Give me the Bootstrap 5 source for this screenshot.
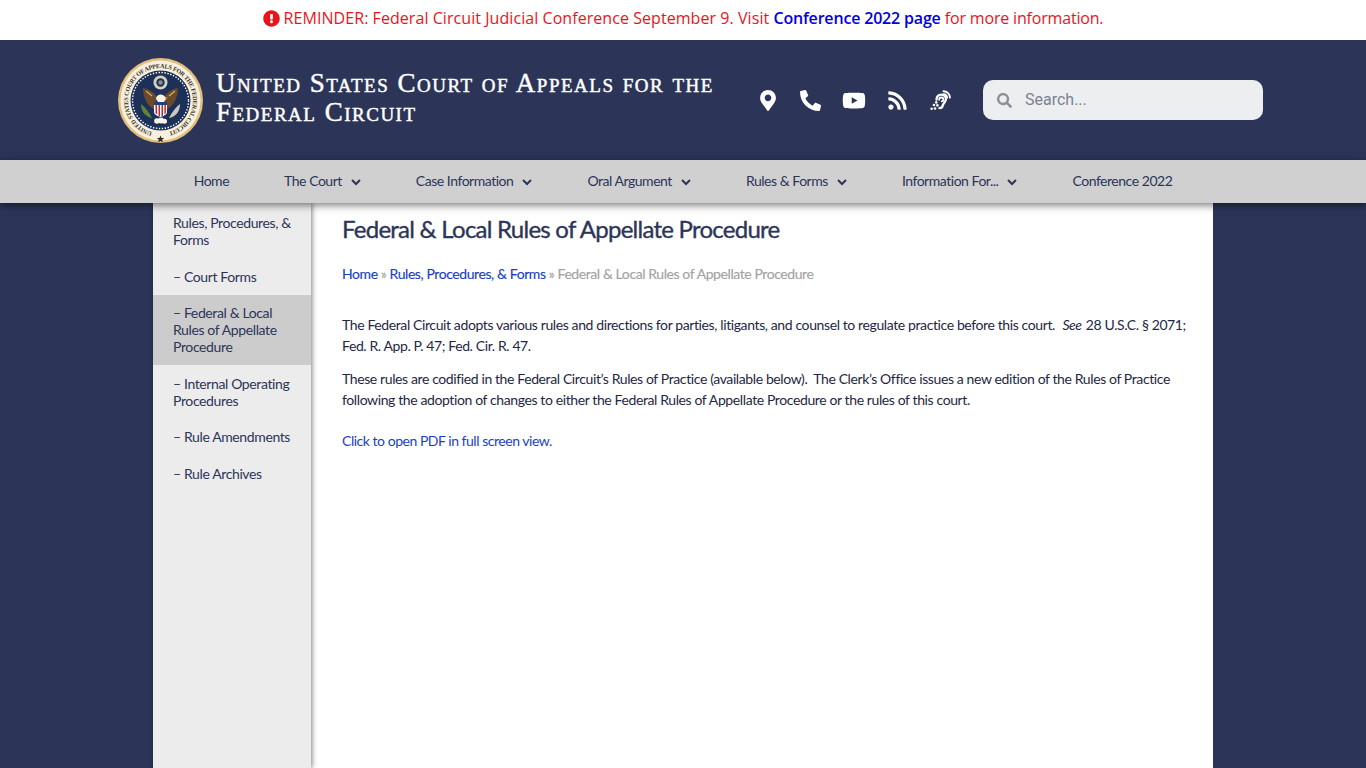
<!DOCTYPE html>
<html lang="en">
<head>
<meta charset="UTF-8">
<title>Federal &amp; Local Rules of Appellate Procedure</title>
<link href="https://cdn.jsdelivr.net/npm/bootstrap@5.3.0/dist/css/bootstrap.min.css" rel="stylesheet">
<style>
    body { background-color: #2c3558; font-family: "Lato", sans-serif; color: #2c3558; overflow: hidden; height: 768px; }
    .alert-strip { height: 40px; padding-bottom: 4px; background: #fff; color: #e8141c; font-family: "Open Sans", sans-serif; font-size: 16px; letter-spacing: .06px; }
    .alert-strip a { color: #0000e0; text-decoration: none; font-weight: 600; letter-spacing: -.18px; }
    .alert-strip .tail-text { letter-spacing: -.18px; }
    .alert-strip svg { width: 17px; height: 17px; fill: #e8141c; }
    .site-head { height: 120px; background: #2c3558; padding-left: 118px; }
    .site-title { width: 530px; margin-left: 13px; padding-bottom: 4px; color: #fff; font-family: "Liberation Serif", serif; font-variant: small-caps; font-weight: 400; -webkit-text-stroke: .45px #fff; font-size: 27px; line-height: 29px; letter-spacing: 1.5px; }
    .head-icons { width: 216px; display: grid; grid-template-columns: repeat(5, 1fr); justify-items: center; align-items: center; }
    .head-icons svg { fill: #fff; display: block; }
    .search-box { width: 280px; height: 40px; margin-left: 21px; background: #eceef0; border-radius: 10px; padding-left: 14px; color: #7b8290; font-family: Roboto, sans-serif; font-size: 16px; }
    .search-box svg { width: 15px; height: 15px; fill: #8a8f98; margin-right: 13px; }
    .main-menu { height: 43px; padding-bottom: 2px; background: #d0d0d0; position: relative; z-index: 2; box-shadow: 0 2px 8px rgba(0,0,0,.55); font-size: 14px; letter-spacing: -.47px; }
    .main-menu a { padding: 0 27.5px; color: #2c3558; text-decoration: none; }
    .main-menu svg { width: 10px; height: 7px; margin-left: 9px; fill: none; stroke: #2c3558; stroke-width: 2; }
    .page-sheet { width: 1060px; height: 565px; margin-left: 153px; background: #fff; }
    .side-col { width: 158px; padding-top: 1.5px; background: #ececec; box-shadow: 1px 0 5px rgba(0,0,0,.5); font-size: 14px; line-height: 17px; letter-spacing: -.38px; }
    .side-col a { display: block; padding: 9.75px 20px; color: #2c3558; text-decoration: none; }
    .side-col a.current { background: #ccc; }
    .body-col { padding: 0 25px 0 31px; font-size: 14px; line-height: 21px; letter-spacing: -.39px; color: #1f2744; }
    .body-col h1 { font-size: 24px; line-height: 30px; margin: 11px 0 0; font-weight: 400; letter-spacing: -.75px; -webkit-text-stroke: .35px #2c3558; color: #2c3558; }
    .body-col em { margin: 0 1px; }
    .crumbs { margin: 19px 0 30px; font-size: 14px; letter-spacing: -.42px; color: #a3a3a3; -webkit-text-stroke: .15px; }
    .body-col a { color: #1a3fc4; text-decoration: none; }
    .body-col p { margin-bottom: 12px; }
    .body-col p.pdf-line { margin-top: 20px; letter-spacing: -.47px; }
    .seal-wrap { width: 85px; height: 85px; flex: none; }
</style>
</head>
<body>
    <div class="alert-strip d-flex align-items-center justify-content-center gap-1">
        <svg viewBox="0 0 512 512"><path d="M504 256c0 136.997-111.043 248-248 248S8 392.997 8 256C8 119.083 119.043 8 256 8s248 111.083 248 248zm-248 50c-25.405 0-46 20.595-46 46s20.595 46 46 46 46-20.595 46-46-20.595-46-46-46zm-43.673-165.346l7.418 136c.347 6.364 5.609 11.346 11.982 11.346h48.546c6.373 0 11.635-4.982 11.982-11.346l7.418-136c.375-6.874-5.098-12.654-11.982-12.654h-63.383c-6.884 0-12.356 5.78-11.981 12.654z"/></svg>
        <span>REMINDER: Federal Circuit Judicial Conference September 9. Visit <a href="#">Conference 2022 page</a> <span class="tail-text">for more information.</span></span>
    </div>

    <header class="site-head d-flex align-items-center">
        <div class="seal-wrap">
            <svg viewBox="0 0 85 85" width="85" height="85">
                <defs><path id="sealRing" d="M34.09 73.9A32.5 32.5 0 1 1 50.91 73.9"/></defs>
                <circle cx="42.5" cy="42.5" r="42.5" fill="#e3bf7c"/>
                <circle cx="42.5" cy="42.5" r="40" fill="#f8f0dc"/>
                <circle cx="42.5" cy="42.5" r="30" fill="#1d3158"/>
                <circle cx="42.5" cy="42.5" r="28" fill="none" stroke="#fff" stroke-width="1.4" stroke-dasharray="1.4 1.55"/>
                <text font-size="6.2" font-family="Liberation Serif, serif" font-weight="700" fill="#33302a" textLength="187"><textPath href="#sealRing">UNITED STATES COURT OF APPEALS FOR THE FEDERAL CIRCUIT</textPath></text>
                <path d="M42.500 77.500l1.100 2.400 2.600.2-2 1.700.6 2.500-2.300-1.300-2.300 1.300.6-2.500-2-1.700 2.600-.2z" fill="#33302a"/>
                <circle cx="42.500" cy="24.500" r="7" fill="#d6d2c2"/>
                <circle cx="42.500" cy="24.500" r="4.200" fill="#1d3158"/>
                <circle cx="42.500" cy="24.500" r="2.200" fill="#8f8f88"/>
                <path d="M39 39C35 33 30 31 25 30c0 8 3 17 11 21zM46 39c4-6 9-8 14-9 0 8-3 17-11 21z" fill="#6b4a2c"/>
                <path d="M28 33l6 5M57 33l-6 5" stroke="#d8b25e" stroke-width="1.200"/>
                <path d="M38 41c0-6 9-6 10 0l-2 3h-6z" fill="#f5f3ea"/>
                <path d="M47 39l3 1-3 1z" fill="#e0b040"/>
                <path d="M36 44h13v10c0 2.500-3.500 4-6.500 5-3-1-6.500-2.500-6.500-5z" fill="#fff"/>
                <path d="M36 44h13v3H36z" fill="#23407a"/>
                <path d="M37.500 47h1.500v9.200l-1.500-1zM40.500 47h1.500v11.200l-1.500-.5zM43.500 47H45v10.700l-1.500.5zM46.400 47h1.500v8l-1.500 1.200z" fill="#b22a36"/>
                <path d="M23 46c4 3 8 8 11 14-6-1-11-6-11-14z" fill="#5f8437"/>
                <path d="M62 46c-4 3-8 8-11 14 6-1 11-6 11-14z" fill="#c9c9bd"/>
                <circle cx="39" cy="63" r="2.800" fill="#f5f3ea"/><circle cx="43" cy="62.500" r="3" fill="#f5f3ea"/><circle cx="46.500" cy="63.300" r="2.500" fill="#f5f3ea"/>
            </svg>
        </div>
        <div class="site-title">United States Court of Appeals for the Federal Circuit</div>
        <div class="head-icons">
            <svg viewBox="0 0 384 512" width="16" height="21"><path d="M172.268 501.67C26.97 291.031 0 262.556 0 192 0 85.961 85.961 0 192 0s192 85.961 192 192c0 70.556-26.97 99.031-172.268 309.67-9.535 13.774-29.93 13.773-39.464 0zM192 272c44.183 0 80-35.817 80-80s-35.817-80-80-80-80 35.817-80 80 35.817 80 80 80z"/></svg>
            <svg viewBox="0 0 512 512" width="21" height="21"><g transform="translate(512 0) scale(-1 1)"><path d="M493.4 24.6l-104-24c-11.3-2.6-22.9 3.3-27.5 13.9l-48 112c-4.2 9.8-1.4 21.3 6.9 28l60.6 49.6c-36 76.7-98.900 140.500-177.200 177.200l-49.600-60.600c-6.800-8.300-18.200-11.100-28-6.900l-112 48C3.900 366.500-2 378.100.6 389.400l24 104C27.100 504.200 36.700 512 48 512c256.100 0 464-207.500 464-464 0-11.200-7.700-20.900-18.600-23.400z"/></g></svg>
            <svg viewBox="0 0 576 512" width="24" height="21"><path d="M549.655 124.083c-6.281-23.65-24.787-42.276-48.284-48.597C458.781 64 288 64 288 64S117.22 64 74.629 75.486c-23.497 6.322-42.003 24.947-48.284 48.597-11.412 42.867-11.412 132.305-11.412 132.305s0 89.438 11.412 132.305c6.281 23.65 24.787 41.5 48.284 47.821C117.22 448 288 448 288 448s170.78 0 213.371-11.486c23.497-6.321 42.003-24.171 48.284-47.821 11.412-42.867 11.412-132.305 11.412-132.305s0-89.438-11.412-132.305zm-317.51 213.508V175.185l142.739 81.205-142.739 81.201z"/></svg>
            <svg viewBox="0 0 448 512" width="19" height="21"><path d="M128.081 415.959c0 35.369-28.672 64.041-64.041 64.041S0 451.328 0 415.959s28.672-64.041 64.041-64.041 64.04 28.673 64.04 64.041zm175.66 47.25c-8.354-154.6-132.185-278.587-286.95-286.95C7.656 175.765 0 183.105 0 192.253v48.069c0 8.415 6.49 15.472 14.887 16.018 111.832 7.284 201.473 96.702 208.772 208.772.547 8.397 7.604 14.887 16.018 14.887h48.069c9.149.001 16.489-7.655 15.995-16.79zm144.249.288C439.596 229.677 251.465 40.445 16.503 32.01 7.473 31.686 0 38.981 0 48.016v48.068c0 8.625 6.835 15.645 15.453 15.999 191.179 7.839 344.627 161.316 352.465 352.465.353 8.618 7.373 15.453 15.999 15.453h48.068c9.034-.001 16.329-7.474 16.005-16.504z"/></svg>
            <svg viewBox="0 0 21 21" width="21" height="21"><g fill="none" stroke="#fff" stroke-linecap="round"><path d="M13.500 1.200c3.600.1 6.300 2.800 6.400 6.400M13.500 4.200c2 .1 3.400 1.500 3.500 3.500" stroke-width="2"/><path d="M6.500 9.700c0-3.300 2.200-5.100 4.700-5.100 2.600 0 4.700 2 4.700 4.700 0 3-2.700 3.800-3.100 6-.3 1.800-1.500 2.900-3.300 2.900" stroke-width="2.300"/><path d="M9.200 9.800c0-1.400 .9-2.300 2.100-2.300s2.100 .9 2.100 2.100-1 1.700-1.700 1.700" stroke-width="1.800"/></g><circle cx="6.300" cy="12.400" r="1.300" fill="#fff"/><circle cx="4" cy="15" r="1.300" fill="#fff"/><circle cx="7.400" cy="15.400" r="1.300" fill="#fff"/><circle cx="1.600" cy="18.800" r="1.300" fill="#fff"/><circle cx="5" cy="18.500" r="1.300" fill="#fff"/></svg>
        </div>
        <div class="search-box d-flex align-items-center">
            <svg viewBox="0 0 512 512"><path d="M505 442.7L405.3 343c-4.5-4.5-10.6-7-17-7H372c27.6-35.3 44-79.7 44-128C416 93.1 322.9 0 208 0S0 93.1 0 208s93.1 208 208 208c48.3 0 92.7-16.4 128-44v16.3c0 6.4 2.5 12.5 7 17l99.7 99.7c9.4 9.4 24.6 9.4 33.9 0l28.3-28.3c9.4-9.4 9.4-24.6.1-34zM208 336c-70.7 0-128-57.2-128-128 0-70.7 57.2-128 128-128 70.7 0 128 57.2 128 128 0 70.7-57.2 128-128 128z"/></svg>
            <span>Search...</span>
        </div>
    </header>

    <nav class="main-menu d-flex align-items-center justify-content-center">
        <a href="#">Home</a>
        <a href="#">The Court<svg viewBox="0 0 10 7"><path d="M1 1l4 4 4-4"/></svg></a>
        <a href="#">Case Information<svg viewBox="0 0 10 7"><path d="M1 1l4 4 4-4"/></svg></a>
        <a href="#">Oral Argument<svg viewBox="0 0 10 7"><path d="M1 1l4 4 4-4"/></svg></a>
        <a href="#">Rules &amp; Forms<svg viewBox="0 0 10 7"><path d="M1 1l4 4 4-4"/></svg></a>
        <a href="#">Information For...<svg viewBox="0 0 10 7"><path d="M1 1l4 4 4-4"/></svg></a>
        <a href="#">Conference 2022</a>
    </nav>

    <div class="page-sheet d-flex">
        <aside class="side-col flex-shrink-0">
            <a href="#">Rules, Procedures, &amp; Forms</a>
            <a href="#">– Court Forms</a>
            <a href="#" class="current">– Federal &amp; Local Rules of Appellate Procedure</a>
            <a href="#">– Internal Operating Procedures</a>
            <a href="#">– Rule Amendments</a>
            <a href="#">– Rule Archives</a>
        </aside>
        <main class="body-col flex-grow-1">
            <h1>Federal &amp; Local Rules of Appellate Procedure</h1>
            <div class="crumbs"><a href="#">Home</a> » <a href="#">Rules, Procedures, &amp; Forms</a> » Federal &amp; Local Rules of Appellate Procedure</div>
            <p>The Federal Circuit adopts various rules and directions for parties, litigants, and counsel to regulate practice before this court.&nbsp; <em>See</em> 28 U.S.C. § 2071; Fed. R. App. P. 47; Fed. Cir. R. 47.</p>
            <p>These rules are codified in the Federal Circuit’s Rules of Practice (available below).&nbsp; The Clerk’s Office issues a new edition of the Rules of Practice following the adoption of changes to either the Federal Rules of Appellate Procedure or the rules of this court.</p>
            <p class="pdf-line"><a href="#">Click to open PDF in full screen view.</a></p>
        </main>
    </div>
    <script src="https://cdn.jsdelivr.net/npm/bootstrap@5.3.0/dist/js/bootstrap.bundle.min.js"></script>
</body>
</html>
